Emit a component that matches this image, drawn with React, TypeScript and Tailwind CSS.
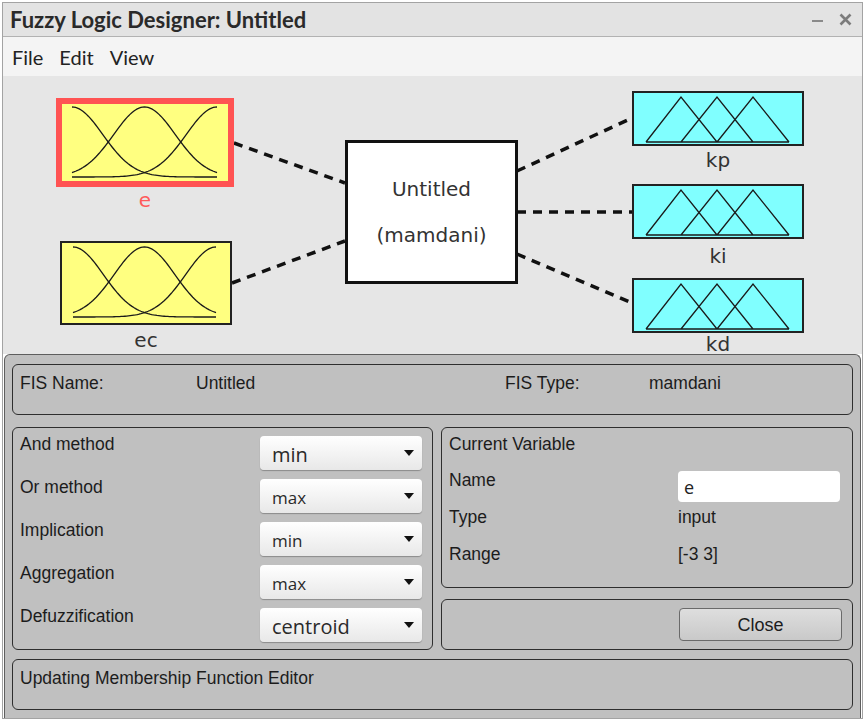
import React from "react";

function gaussPaths(x0: number, x1: number, top: number, base: number) {
  const sigma = 1.274;
  const centers = [-3, 0, 3];
  return centers.map((c) => {
    const pts: string[] = [];
    const n = 80;
    for (let i = 0; i <= n; i++) {
      const u = -3 + (6 * i) / n;
      const v = Math.exp(-((u - c) * (u - c)) / (2 * sigma * sigma));
      const x = x0 + ((u + 3) / 6) * (x1 - x0);
      const y = base - v * (base - top);
      pts.push(`${i === 0 ? "M" : "L"}${x.toFixed(2)} ${y.toFixed(2)}`);
    }
    return pts.join(" ");
  });
}

function Gauss({ w, h, x0, x1, top, base }: { w: number; h: number; x0: number; x1: number; top: number; base: number }) {
  const paths = gaussPaths(x0, x1, top, base);
  return (
    <svg width={w} height={h} viewBox={`0 0 ${w} ${h}`} className="block">
      {paths.map((d, i) => (
        <path key={i} d={d} fill="none" stroke="#1a1a1a" strokeWidth={1.3} />
      ))}
    </svg>
  );
}

function Tri() {
  return (
    <svg width={168} height={51} viewBox="0 0 168 51" className="block">
      <path
        d="M12 49 L47 4 L83 49 M47 49 L83 4 L119 49 M83 49 L119 4 L155 49 M12 49 L155 49"
        fill="none"
        stroke="#1a1a1a"
        strokeWidth={1.3}
      />
    </svg>
  );
}

function Arrow() {
  return (
    <svg width={10} height={6} viewBox="0 0 10 6" className="block">
      <path d="M0 0 L10 0 L5 6 Z" fill="#111" />
    </svg>
  );
}

function Select({ value, big }: { value: string; big?: boolean }) {
  return (
    <div className="w-[162px] h-[34px] rounded-[4px] bg-linear-to-b from-[#ffffff] to-[#e8e8e8] shadow-[0_1px_1px_rgba(0,0,0,0.28)] flex items-center justify-between pl-[12px] pr-[8px]">
      <span className={`font-['Open_Sans'] text-[#2a2a2a] ${big ? "text-[20px] leading-[26px] pt-[3px]" : "text-[17px] leading-[22px] pt-[3px]"}`}>{value}</span>
      <Arrow />
    </div>
  );
}

export default function App() {
  const rows: [string, string, boolean][] = [
    ["And method", "min", true],
    ["Or method", "max", false],
    ["Implication", "min", false],
    ["Aggregation", "max", false],
    ["Defuzzification", "centroid", true],
  ];
  return (
    <div className="w-[866px] h-[721px] bg-white overflow-hidden pt-[2px] pl-[2px]">
      <div className="w-[861px] h-[717px] border border-[#a3a3a3] flex flex-col">
        {/* title bar */}
        <div className="h-[34px] shrink-0 bg-[#e3e3e3] border-b border-[#b2b2b2] flex items-center justify-between pl-[7px] pr-[10px]">
          <span className="font-['Lato'] font-bold text-[22px] leading-none text-[#2a2a2a]">Fuzzy Logic Designer: Untitled</span>
          <div className="flex items-center gap-[16px]">
            <svg width={11} height={4} viewBox="0 0 11 4" className="block mt-[3px]">
              <path d="M0 2 L11 2" stroke="#8a8a8a" strokeWidth={2} />
            </svg>
            <svg width={13} height={13} viewBox="0 0 13 13" className="block">
              <path d="M1.5 1.5 L11.5 11.5 M11.5 1.5 L1.5 11.5" stroke="#7c7c7c" strokeWidth={2.6} />
            </svg>
          </div>
        </div>
        {/* menu bar */}
        <div className="h-[39px] shrink-0 bg-[#f4f4f4] flex items-center pl-[9px] gap-[16px] font-['Lato'] text-[20px] text-[#222]">
          <span>File</span>
          <span>Edit</span>
          <span>View</span>
        </div>
        {/* diagram */}
        <div className="relative h-[278px] shrink-0 bg-[#e6e6e6] overflow-hidden font-['DejaVu_Sans'] text-[#333]">
          <svg className="absolute left-0 top-0" width={859} height={278}>
            <g stroke="#111" strokeWidth={3.5} strokeDasharray="9 7" fill="none">
              <path d="M231 67 L342 107" />
              <path d="M229 207 L342 165" />
              <path d="M514 95 L629 42" />
              <path d="M514 136 L629 136" />
              <path d="M514 178 L629 227" />
            </g>
          </svg>
          {/* e */}
          <div className="absolute left-[53px] top-[22px] w-[178px] h-[89px] border-[6px] border-[#ff5353] bg-[#ffff80]">
            <Gauss w={166} h={77} x0={10} x1={155} top={3} base={73} />
          </div>
          <div className="absolute left-[53px] top-[112px] w-[178px] text-center text-[20px] leading-[24px] text-[#ff5a5a]">e</div>
          {/* ec */}
          <div className="absolute left-[57px] top-[165px] w-[172px] h-[84px] border-2 border-[#222] bg-[#ffff80]">
            <Gauss w={168} h={80} x0={11} x1={154} top={4} base={74} />
          </div>
          <div className="absolute left-[57px] top-[252px] w-[172px] text-center text-[20px] leading-[24px]">ec</div>
          {/* center */}
          <div className="absolute left-[342px] top-[64px] w-[173px] h-[144px] border-[3px] border-[#111] bg-white flex flex-col items-center pt-[34px] gap-[22px] text-[20px] leading-[24px]">
            <span>Untitled</span>
            <span>(mamdani)</span>
          </div>
          {/* outputs */}
          <div className="absolute left-[629px] top-[15px] w-[172px] h-[55px] border-2 border-[#222] bg-[#80ffff]">
            <Tri />
          </div>
          <div className="absolute left-[629px] top-[72px] w-[172px] text-center text-[20px] leading-[24px]">kp</div>
          <div className="absolute left-[629px] top-[108px] w-[172px] h-[55px] border-2 border-[#222] bg-[#80ffff]">
            <Tri />
          </div>
          <div className="absolute left-[629px] top-[168px] w-[172px] text-center text-[20px] leading-[24px]">ki</div>
          <div className="absolute left-[629px] top-[202px] w-[172px] h-[55px] border-2 border-[#222] bg-[#80ffff]">
            <Tri />
          </div>
          <div className="absolute left-[629px] top-[256px] w-[172px] text-center text-[20px] leading-[24px]">kd</div>
        </div>
        {/* lower panel */}
        <div className="mx-[1px] flex-1 bg-[#c0c0c0] border-t border-x border-[#5e5e5e] rounded-t-[6px] pt-[9px] px-[7px] font-['Liberation_Sans'] text-[17.5px] leading-[20px] text-[#1c1c1c]">
          <div className="h-[51px] rounded-[6px] border border-[#2e2e2e] pt-[8px] pl-[7px] flex">
            <span className="w-[176px]">FIS Name:</span>
            <span className="w-[309px]">Untitled</span>
            <span className="w-[144px]">FIS Type:</span>
            <span>mamdani</span>
          </div>
          <div className="mt-[12px] flex gap-[8px]">
            <div className="w-[421px] h-[223px] rounded-[6px] border border-[#2e2e2e] pt-[8px] pl-[7px] pr-[10px] flex flex-col gap-[9px]">
              {rows.map(([label, value, big]) => (
                <div key={label} className="h-[34px] flex justify-between items-start">
                  <span className="-mt-[2px]">{label}</span>
                  <Select value={value} big={big} />
                </div>
              ))}
            </div>
            <div className="w-[412px] flex flex-col gap-[11px]">
              <div className="h-[161px] rounded-[6px] border border-[#2e2e2e] pt-[6px] pl-[7px]">
                <div>Current Variable</div>
                <div className="mt-[17px] flex items-start h-[31px]">
                  <span className="w-[229px] -mt-[1px]">Name</span>
                  <div className="w-[162px] h-[31px] rounded-[4px] bg-white flex items-center pl-[6px] font-['Open_Sans'] text-[18px] text-[#222]">e</div>
                </div>
                <div className="mt-[5px] flex">
                  <span className="w-[229px]">Type</span>
                  <span>input</span>
                </div>
                <div className="mt-[17px] flex">
                  <span className="w-[229px]">Range</span>
                  <span>[-3 3]</span>
                </div>
              </div>
              <div className="h-[51px] rounded-[6px] border border-[#2e2e2e] flex justify-end items-start pt-[8px] pr-[10px]">
                <div className="w-[163px] h-[33px] rounded-[4px] border border-[#6a6a6a] bg-linear-to-b from-[#dedede] to-[#c9c9c9] flex items-center justify-center text-[18px] text-[#1c1c1c]">
                  Close
                </div>
              </div>
            </div>
          </div>
          <div className="mt-[9px] h-[51px] rounded-[6px] border border-[#2e2e2e] pt-[8px] pl-[7px]">
            Updating Membership Function Editor
          </div>
        </div>
      </div>
    </div>
  );
}
